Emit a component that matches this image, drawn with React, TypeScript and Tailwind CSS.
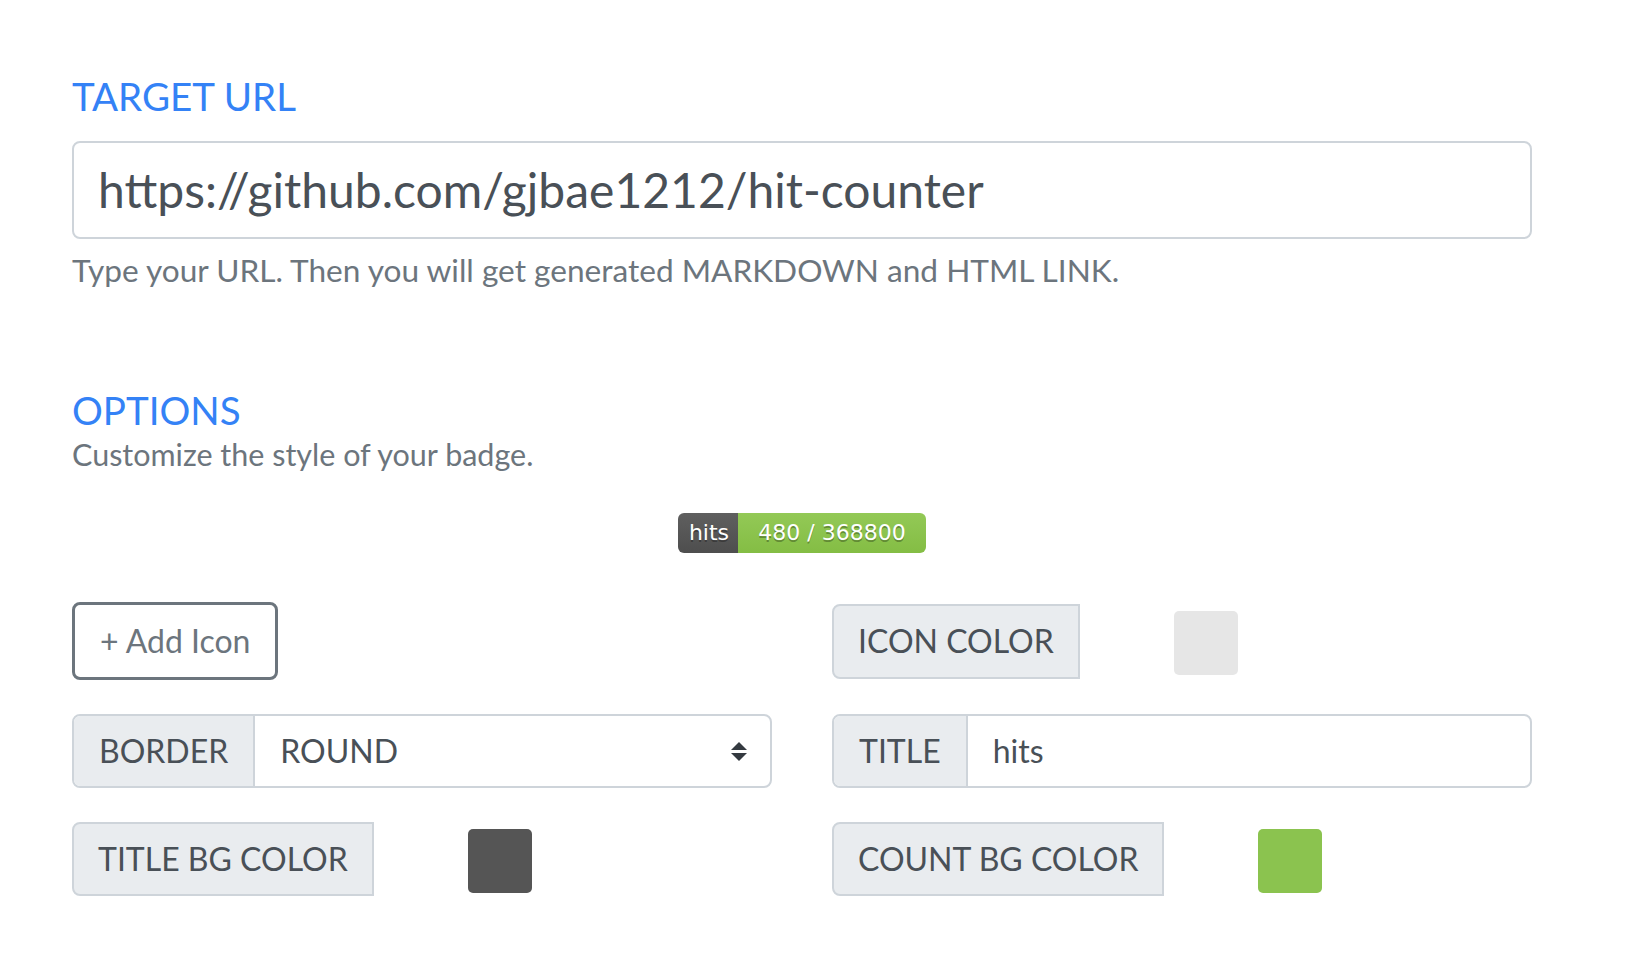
import React from "react";

function SelectArrows() {
  return (
    <svg width="16" height="19" viewBox="0 0 16 19" aria-hidden="true">
      <polygon points="0,8 8,0 16,8" fill="#343a40" />
      <polygon points="0,11 16,11 8,19" fill="#343a40" />
    </svg>
  );
}

function Badge() {
  return (
    <div className="flex h-[40px] overflow-hidden rounded-[6px] font-['DejaVu_Sans','Verdana',sans-serif] text-[22px] leading-[40px] text-white">
      <div className="w-[60px] bg-gradient-to-b from-[#5f5f5f] to-[#4e4e4e] pl-[2px] text-center [text-shadow:0_2px_0_rgba(1,1,1,0.3)]">
        hits
      </div>
      <div className="w-[188px] bg-gradient-to-b from-[#93c956] to-[#84bd44] text-center [text-shadow:0_2px_0_rgba(1,1,1,0.3)]">
        480 / 368800
      </div>
    </div>
  );
}

function ColorRow({ label, color, h }: { label: string; color: string; h: string }) {
  return (
    <div className="flex items-center">
      <div
        className={`${h} flex items-center rounded-l-[8px] border-2 border-[#ced4da] bg-[#e9ecef] px-[24px] text-[32px] text-[#495057]`}
      >
        {label}
      </div>
      <div className={`ml-[94px] mt-[4px] h-[64px] w-[64px] rounded-[5px] ${color}`} />
    </div>
  );
}

export default function App() {
  return (
    <div className="min-h-screen bg-white font-['Lato','Noto_Sans',sans-serif]">
      <div className="ml-[72px] w-[1460px] pt-[72px] text-[#495057]">
        <h2 className="text-[38.5px] leading-[48px] text-[#3482f6]">TARGET URL</h2>
        <div className="mt-[21px] flex h-[98px] items-center rounded-[8px] border-2 border-[#ced4da] px-[24px] text-[48px] leading-[58px] text-[#495057]">
          https://github.com/gjbae1212/hit-counter
        </div>
        <p className="mt-[12px] text-[31.6px] leading-[38px] text-[#6c757d]">
          Type your URL. Then you will get generated MARKDOWN and HTML LINK.
        </p>

        <h2 className="mt-[97px] text-[38.5px] leading-[48px] text-[#3482f6]">OPTIONS</h2>
        <p className="mt-[3px] text-[30.5px] leading-[34px] text-[#6c757d]">
          Customize the style of your badge.
        </p>

        <div className="mt-[42px] flex justify-center">
          <Badge />
        </div>

        <div className="mt-[49px] grid grid-cols-2 gap-x-[60px] gap-y-[34px]">
          <div className="flex h-[78px] items-center">
            <button className="flex h-[78px] items-center rounded-[8px] border-[3px] border-[#6c757d] bg-white px-[25px] text-[32px] text-[#6c757d]">
              + Add Icon
            </button>
          </div>
          <div className="flex h-[78px] items-center">
            <ColorRow label="ICON COLOR" color="bg-[#e6e6e6]" h="h-[75px]" />
          </div>

          <div className="flex h-[74px] rounded-[8px] border-2 border-[#ced4da] text-[32px]">
            <div className="flex items-center rounded-l-[6px] border-r-2 border-[#ced4da] bg-[#e9ecef] px-[25px] text-[#495057]">
              BORDER
            </div>
            <div className="flex flex-1 items-center justify-between pl-[25px] pr-[23px] text-[#495057]">
              <span>ROUND</span>
              <SelectArrows />
            </div>
          </div>
          <div className="flex h-[74px] rounded-[8px] border-2 border-[#ced4da] text-[32px]">
            <div className="flex items-center rounded-l-[6px] border-r-2 border-[#ced4da] bg-[#e9ecef] px-[25px] text-[#495057]">
              TITLE
            </div>
            <div className="flex flex-1 items-center pl-[25px] text-[#495057]">hits</div>
          </div>

          <ColorRow label="TITLE BG COLOR" color="bg-[#555555]" h="h-[74px]" />
          <ColorRow label="COUNT BG COLOR" color="bg-[#8bc34f]" h="h-[74px]" />
        </div>
      </div>
    </div>
  );
}
